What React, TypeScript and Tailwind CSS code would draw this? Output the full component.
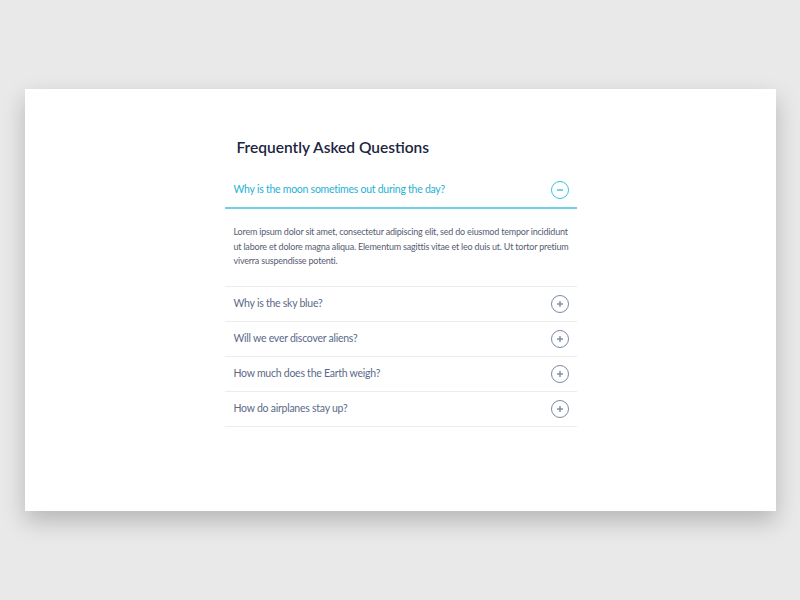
import { useState } from 'react'

interface Faq {
  q: string
  a?: string[]
}

const faqs: Faq[] = [
  {
    q: 'Why is the moon sometimes out during the day?',
    a: [
      'Lorem ipsum dolor sit amet, consectetur adipiscing elit, sed do eiusmod tempor incididunt',
      'ut labore et dolore magna aliqua. Elementum sagittis vitae et leo duis ut. Ut tortor pretium',
      'viverra suspendisse potenti.',
    ],
  },
  { q: 'Why is the sky blue?' },
  { q: 'Will we ever discover aliens?' },
  { q: 'How much does the Earth weigh?' },
  { q: 'How do airplanes stay up?' },
]

function Toggle({ open }: { open: boolean }) {
  return (
    <svg width="20" height="20" viewBox="0 0 20 20" fill="none" stroke="currentColor" strokeWidth="1">
      <circle cx="10" cy="10" r="8.5" />
      <path d="M7 10h6" strokeWidth="1.4" />
      {!open && <path d="M10 7v6" strokeWidth="1.4" />}
    </svg>
  )
}

export default function App() {
  const [abierto, setAbierto] = useState(0)

  return (
    <div className="min-h-screen bg-[#e9e9e9] pt-[89px] px-[25px] font-['Lato',sans-serif]">
      <div className="bg-white h-[422px] w-[751px] shadow-[0_10px_22px_rgba(0,0,0,0.22)] pt-[48px]">
        <div className="mx-auto w-[352px]">
          <h1 className="pl-3 text-[15.5px] leading-5 font-semibold text-[#1c2541]">Frequently Asked Questions</h1>
          <div className="mt-[15px]">
            {faqs.map((f, i) => {
              const open = abierto === i
              return (
                <div key={f.q}>
                  <button
                    type="button"
                    onClick={() => setAbierto(open ? -1 : i)}
                    className={`w-full flex items-center justify-between pl-[9px] pr-[7px] text-left ${
                      open
                        ? 'h-[37px] border-b-2 border-[#6fd0e6] text-[#1fb1d3]'
                        : 'h-[35px] border-b border-[#ececee] text-[#5b6a89]'
                    }`}
                  >
                    <span className="text-[10.5px] tracking-[-0.25px]">{f.q}</span>
                    <span className={open ? 'text-[#3cc1df]' : 'text-[#7d8aa5]'}>
                      <Toggle open={open} />
                    </span>
                  </button>
                  {open && f.a && (
                    <div className="border-b border-[#ececee] pl-[9px] pr-2 pt-[16px] pb-[17px]">
                      <p className="text-[9px] leading-[14.5px] tracking-[-0.2px] text-[#575d73]">
                        {f.a.map((l) => (
                          <span key={l} className="block whitespace-nowrap">
                            {l}
                          </span>
                        ))}
                      </p>
                    </div>
                  )}
                </div>
              )
            })}
          </div>
        </div>
      </div>
    </div>
  )
}
